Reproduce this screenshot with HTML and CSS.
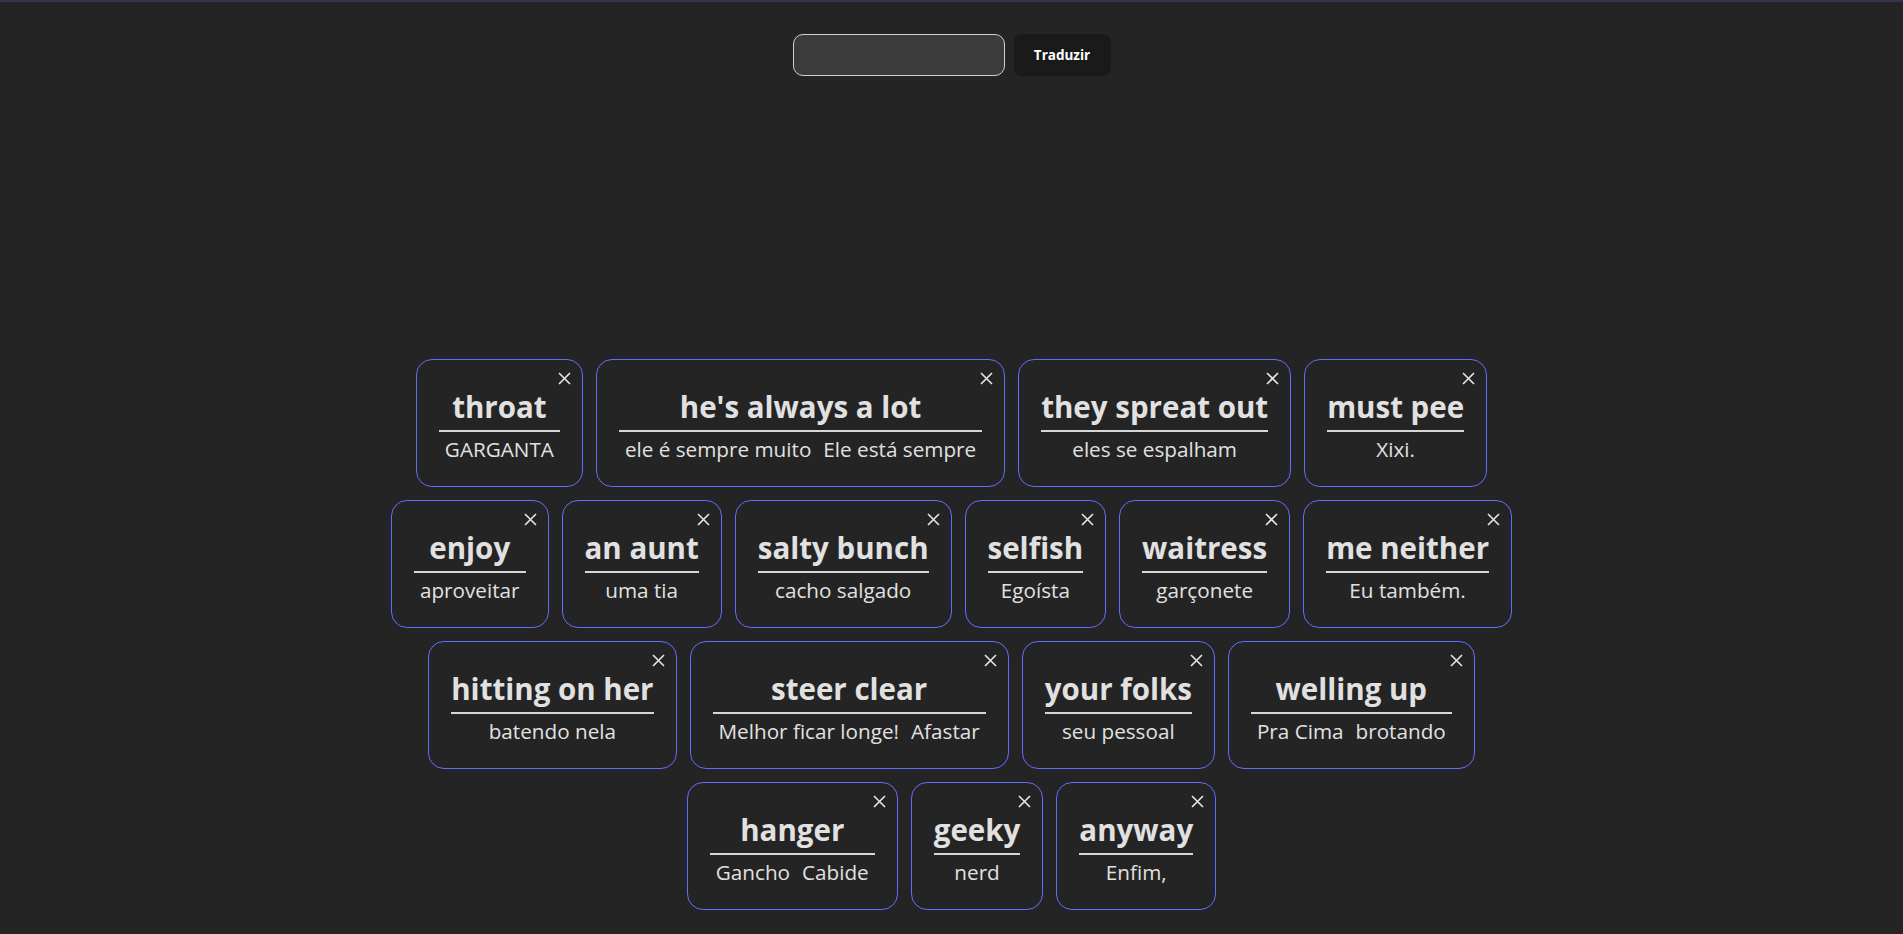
FILE: index.html
```html
<!DOCTYPE html>
<html lang="pt">
<head>
<meta charset="utf-8">
<title>Tradutor</title>
<link rel="stylesheet" href="styles.css">
</head>
<body>
<div class="page">
  <form class="search" onsubmit="return false;">
    <input class="search-input" type="text" aria-label="Palavra">
    <button class="search-btn" type="submit">Traduzir</button>
  </form>

  <div class="cards">
    <div class="card"><span class="close"><svg viewBox="0 0 13 13"><path d="M1 1L12 12M12 1L1 12"/></svg></span><div class="term">throat</div><div class="meaning"><span>GARGANTA</span></div></div>
    <div class="card"><span class="close"><svg viewBox="0 0 13 13"><path d="M1 1L12 12M12 1L1 12"/></svg></span><div class="term">he's always a lot</div><div class="meaning"><span>ele é sempre muito</span><span>Ele está sempre</span></div></div>
    <div class="card"><span class="close"><svg viewBox="0 0 13 13"><path d="M1 1L12 12M12 1L1 12"/></svg></span><div class="term">they spreat out</div><div class="meaning"><span>eles se espalham</span></div></div>
    <div class="card"><span class="close"><svg viewBox="0 0 13 13"><path d="M1 1L12 12M12 1L1 12"/></svg></span><div class="term">must pee</div><div class="meaning"><span>Xixi.</span></div></div>

    <div class="card"><span class="close"><svg viewBox="0 0 13 13"><path d="M1 1L12 12M12 1L1 12"/></svg></span><div class="term">enjoy</div><div class="meaning"><span>aproveitar</span></div></div>
    <div class="card"><span class="close"><svg viewBox="0 0 13 13"><path d="M1 1L12 12M12 1L1 12"/></svg></span><div class="term">an aunt</div><div class="meaning"><span>uma tia</span></div></div>
    <div class="card"><span class="close"><svg viewBox="0 0 13 13"><path d="M1 1L12 12M12 1L1 12"/></svg></span><div class="term">salty bunch</div><div class="meaning"><span>cacho salgado</span></div></div>
    <div class="card"><span class="close"><svg viewBox="0 0 13 13"><path d="M1 1L12 12M12 1L1 12"/></svg></span><div class="term">selfish</div><div class="meaning"><span>Egoísta</span></div></div>
    <div class="card"><span class="close"><svg viewBox="0 0 13 13"><path d="M1 1L12 12M12 1L1 12"/></svg></span><div class="term">waitress</div><div class="meaning"><span>garçonete</span></div></div>
    <div class="card"><span class="close"><svg viewBox="0 0 13 13"><path d="M1 1L12 12M12 1L1 12"/></svg></span><div class="term">me neither</div><div class="meaning"><span>Eu também.</span></div></div>

    <div class="card"><span class="close"><svg viewBox="0 0 13 13"><path d="M1 1L12 12M12 1L1 12"/></svg></span><div class="term">hitting on her</div><div class="meaning"><span>batendo nela</span></div></div>
    <div class="card"><span class="close"><svg viewBox="0 0 13 13"><path d="M1 1L12 12M12 1L1 12"/></svg></span><div class="term">steer clear</div><div class="meaning"><span>Melhor ficar longe!</span><span>Afastar</span></div></div>
    <div class="card"><span class="close"><svg viewBox="0 0 13 13"><path d="M1 1L12 12M12 1L1 12"/></svg></span><div class="term">your folks</div><div class="meaning"><span>seu pessoal</span></div></div>
    <div class="card"><span class="close"><svg viewBox="0 0 13 13"><path d="M1 1L12 12M12 1L1 12"/></svg></span><div class="term">welling up</div><div class="meaning"><span>Pra Cima</span><span>brotando</span></div></div>

    <div class="card"><span class="close"><svg viewBox="0 0 13 13"><path d="M1 1L12 12M12 1L1 12"/></svg></span><div class="term">hanger</div><div class="meaning"><span>Gancho</span><span>Cabide</span></div></div>
    <div class="card"><span class="close"><svg viewBox="0 0 13 13"><path d="M1 1L12 12M12 1L1 12"/></svg></span><div class="term">geeky</div><div class="meaning"><span>nerd</span></div></div>
    <div class="card"><span class="close"><svg viewBox="0 0 13 13"><path d="M1 1L12 12M12 1L1 12"/></svg></span><div class="term">anyway</div><div class="meaning"><span>Enfim,</span></div></div>
  </div>
</div>
</body>
</html>
```

FILE: styles.css
```css
* {
  box-sizing: border-box;
}

html, body {
  margin: 0;
  padding: 0;
  background: #242424;
}

body {
  min-height: 100vh;
  border-top: 2px solid #34344a;
  font-family: "Segoe UI", "Open Sans", Lato, sans-serif;
  color: rgba(255, 255, 255, 0.87);
}

.page {
  display: flex;
  flex-direction: column;
  align-items: center;
}

.search {
  display: flex;
  gap: 9px;
  margin-top: 32px;
}

.search-input {
  width: 212px;
  height: 42px;
  border: 1px solid #cfcfcf;
  border-radius: 10px;
  background: #3b3b3b;
  color: #fff;
  font-family: inherit;
  font-size: 16px;
  padding: 0 10px;
  outline: none;
}

.search-btn {
  width: 97px;
  height: 42px;
  border: none;
  border-radius: 8px;
  background: #1a1a1a;
  color: #fff;
  font-family: inherit;
  font-size: 13.5px;
  font-weight: 700;
  cursor: pointer;
}

.cards {
  width: 1177px;
  margin-top: 283px;
  display: flex;
  flex-wrap: wrap;
  justify-content: center;
  gap: 13px;
}

.card {
  position: relative;
  border: 1px solid #646cff;
  border-radius: 16px;
  padding: 27px 22px 23px;
  display: flex;
  flex-direction: column;
  align-items: stretch;
  text-align: center;
  color: #e1e1e1;
}

.close {
  position: absolute;
  top: 12px;
  right: 11px;
  width: 13px;
  height: 13px;
  display: block;
}

.close svg {
  display: block;
  width: 13px;
  height: 13px;
  fill: none;
  stroke: #e6e6e6;
  stroke-width: 1.6;
}

.term {
  font-size: 29.5px;
  font-weight: 700;
  line-height: 40px;
  padding-bottom: 3px;
  border-bottom: 2px solid #d6d6d6;
  white-space: nowrap;
}

.meaning {
  margin-top: 3px;
  font-size: 20.7px;
  line-height: 28px;
  white-space: nowrap;
}

.meaning span {
  display: inline-block;
  padding: 0 6px;
}
```
